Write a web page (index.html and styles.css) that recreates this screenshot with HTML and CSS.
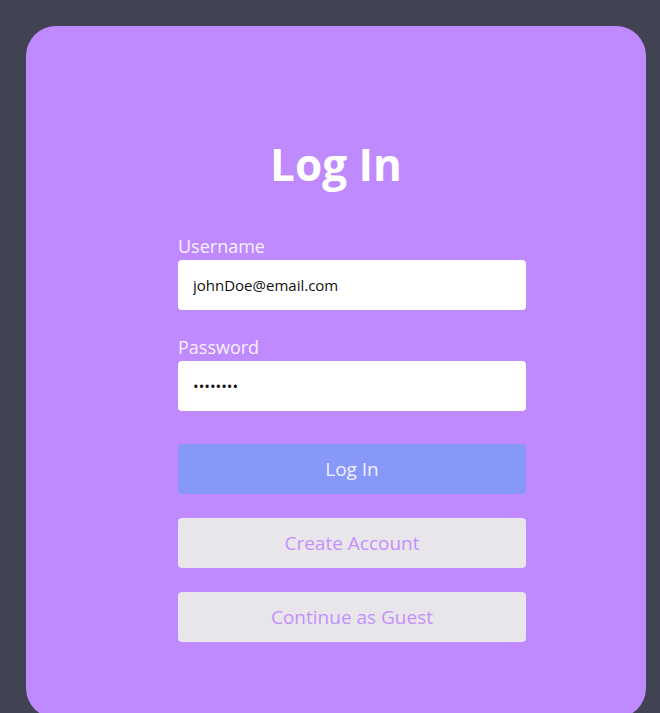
FILE: index.html
```html
<!DOCTYPE html>
<html lang="en">
<head>
<meta charset="utf-8">
<title>Log In</title>
<link rel="stylesheet" href="styles.css">
</head>
<body>
<main class="card">
  <h1 class="title">Log In</h1>
  <form class="form">
    <label class="label" for="user">Username</label>
    <input class="input" id="user" type="text" value="johnDoe@email.com">
    <label class="label label-second" for="pass">Password</label>
    <input class="input" id="pass" type="password" value="password">
    <button type="button" class="btn btn-primary">Log In</button>
    <button type="button" class="btn btn-secondary">Create Account</button>
    <button type="button" class="btn btn-secondary">Continue as Guest</button>
  </form>
</main>
</body>
</html>
```
FILE: styles.css
```css
html, body {
  margin: 0;
  padding: 0;
}
body {
  background: #414353;
  padding: 26px 14px 0 26px;
  height: 713px;
  box-sizing: border-box;
  overflow: hidden;
  font-family: "Open Sans", "Noto Sans", sans-serif;
}
.card {
  width: 620px;
  height: 692px;
  background: #c08aff;
  border-radius: 30px;
  box-sizing: border-box;
  padding-top: 110px;
}
.title {
  margin: 0;
  text-align: center;
  font-size: 44px;
  line-height: 56px;
  font-weight: 700;
  color: #ffffff;
}
.form {
  width: 348px;
  margin: 44px 0 0 152px;
  display: flex;
  flex-direction: column;
}
.label {
  display: block;
  font-size: 18px;
  line-height: 20px;
  margin-bottom: 4px;
  color: #f7f0ff;
}
.label-second {
  margin-top: 27px;
}
.input {
  height: 50px;
  border: none;
  border-radius: 4px;
  background: #ffffff;
  padding: 0 15px;
  font-family: inherit;
  font-size: 15px;
  color: #111111;
  outline: none;
  box-sizing: border-box;
}
.btn {
  height: 50px;
  border: none;
  border-radius: 4px;
  font-family: inherit;
  font-size: 19px;
  cursor: pointer;
}
.btn-primary {
  margin-top: 33px;
  background: #8898f9;
  color: #f1f0ff;
}
.btn-secondary {
  margin-top: 24px;
  background: #e8e6eb;
  color: #c590fb;
}
```
